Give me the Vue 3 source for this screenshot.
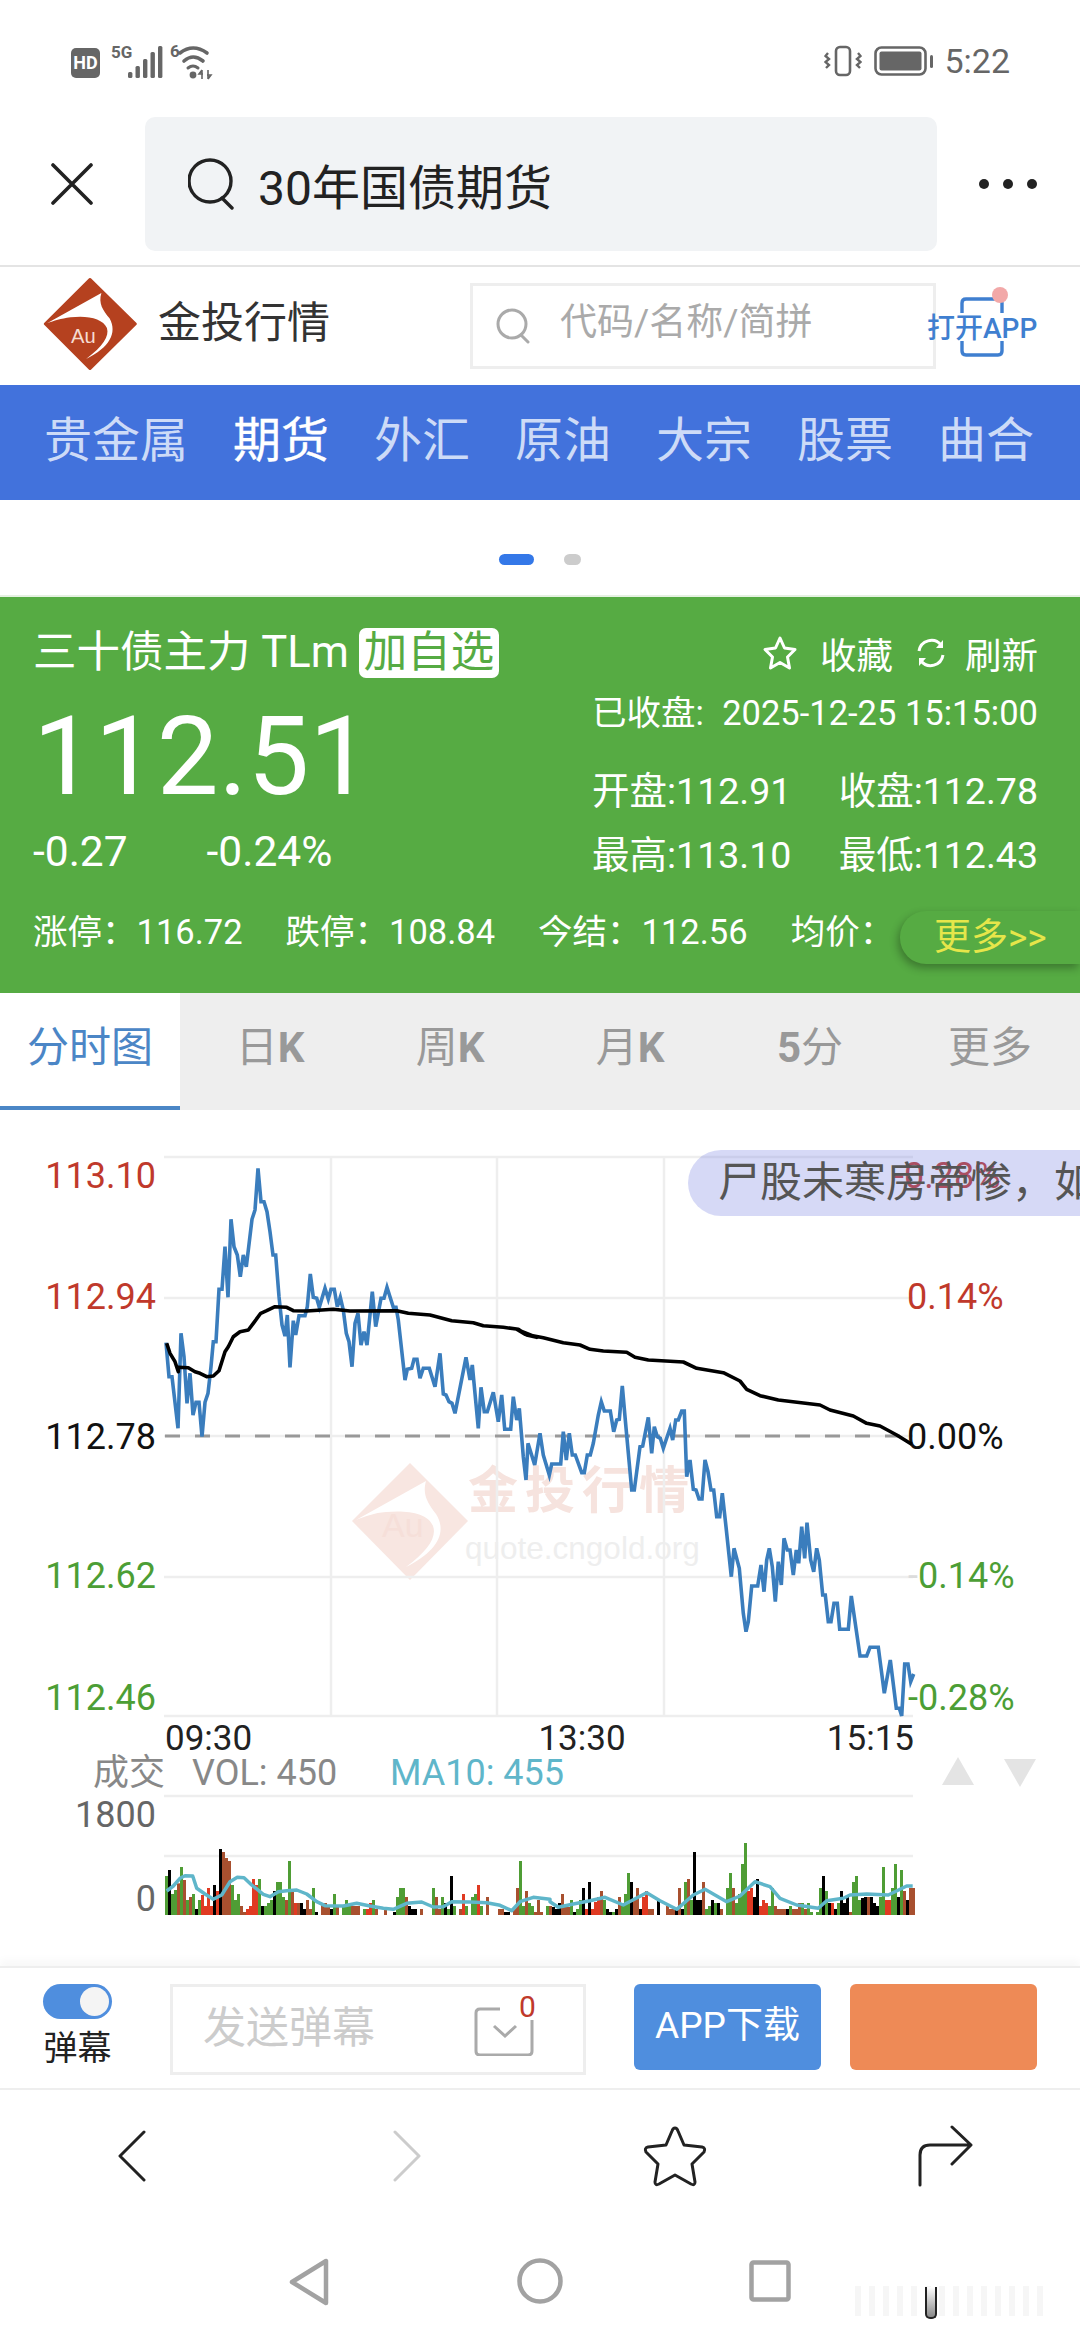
<template>
  <div class="page">
    <!-- status bar -->
    <div class="status-bar">
      <div class="status-left">
        <span class="hd">HD</span>
        <svg class="signal" width="52" height="34" viewBox="0 0 52 34">
          <text x="0" y="13" class="tiny">5G</text>
          <rect v-for="(b, i) in signalBars" :key="i" :x="b.x" :y="b.y" width="4.4" :height="33 - b.y" rx="1.5" fill="#666" />
        </svg>
        <svg class="wifi" width="46" height="36" viewBox="0 0 46 36">
          <text x="0" y="13" class="tiny">6</text>
          <path d="M10 9 Q23 -1 37 9" fill="none" stroke="#666" stroke-width="3.6" stroke-linecap="round" />
          <path d="M14 17 Q23 9 33 17" fill="none" stroke="#666" stroke-width="3.6" stroke-linecap="round" />
          <path d="M18 24 Q23 20 28 24" fill="none" stroke="#666" stroke-width="3" stroke-linecap="round" />
          <circle cx="23" cy="31" r="3.4" fill="#666" />
          <path d="M32 26 V35 M38 26 V35 M32 26 L29 30 H33 M38 35 L41 31 H37" stroke="#666" stroke-width="1.6" fill="none" />
        </svg>
      </div>
      <div class="status-right">
        <svg width="38" height="32" viewBox="0 0 38 32">
          <rect x="12" y="2" width="14" height="28" rx="4" fill="none" stroke="#666" stroke-width="2.6" />
          <path d="M4 8 L1.5 11 L5 14 L1.5 17 L5 20 L2 23" fill="none" stroke="#666" stroke-width="2.4" />
          <path d="M34 8 L36.5 11 L33 14 L36.5 17 L33 20 L36 23" fill="none" stroke="#666" stroke-width="2.4" />
        </svg>
        <svg class="battery" width="60" height="30" viewBox="0 0 60 30">
          <rect x="1.5" y="1.5" width="50" height="27" rx="6" fill="none" stroke="#666" stroke-width="2.6" />
          <rect x="5.5" y="5.5" width="42" height="19" rx="2" fill="#666" />
          <rect x="56" y="9" width="3" height="13" rx="1.5" fill="#666" />
        </svg>
        <span class="clock">5:22</span>
      </div>
    </div>

    <!-- browser bar -->
    <div class="browser-bar">
      <svg class="close-icon" width="42" height="42" viewBox="0 0 42 42">
        <path d="M2 2 L40 40 M40 2 L2 40" stroke="#222" stroke-width="3.6" stroke-linecap="round" />
      </svg>
      <div class="url-box">
        <svg width="48" height="52" viewBox="0 0 48 52">
          <ellipse cx="22" cy="23" rx="21" ry="21" fill="none" stroke="#222" stroke-width="3.4" />
          <path d="M34 40 L44 50" stroke="#222" stroke-width="3.4" stroke-linecap="round" />
        </svg>
        <span class="url-text">30年国债期货</span>
      </div>
      <div class="more-dots"><i></i><i></i><i></i></div>
    </div>

    <!-- site header -->
    <div class="site-header">
      <svg class="logo" width="98" height="96" viewBox="60 45 300 295">
        <path d="M210 55 L350 192 L210 330 L72 192 Z" fill="#b5411f" stroke="#b5411f" stroke-width="8" stroke-linejoin="round" />
        <path d="M78 190 L245 97 C235 130 250 150 270 175 C295 220 270 265 198 300 C250 262 270 230 262 205 C250 175 200 165 150 172 C120 176 100 183 78 190 Z" fill="#fff" />
        <text x="152" y="252" class="logo-au">Au</text>
      </svg>
      <span class="site-name">金投行情</span>
      <div class="site-search">
        <svg width="36" height="36" viewBox="0 0 36 36">
          <circle cx="17" cy="16" r="14" fill="none" stroke="#aaa" stroke-width="3" />
          <path d="M26 27 L33 34" stroke="#aaa" stroke-width="3" stroke-linecap="round" />
        </svg>
        <span class="site-search-text">代码/名称/简拼</span>
      </div>
      <div class="open-app">
        <svg width="44" height="60" viewBox="0 0 44 60">
          <path d="M2 16 V6 Q2 2 6 2 H38 Q42 2 42 6 V16 M2 44 V54 Q2 58 6 58 H38 Q42 58 42 54 V44" fill="none" stroke="#3f7fd0" stroke-width="3.4" />
        </svg>
        <i class="app-dot"></i>
        <span class="app-label">打开APP</span>
      </div>
    </div>

    <!-- channel nav -->
    <div class="channel-nav">
      <span v-for="c in channels" :key="c" :class="{ on: c === '期货' }">{{ c }}</span>
    </div>

    <div class="pager"><i class="cur"></i><i></i></div>

    <!-- quote panel -->
    <div class="quote">
      <div class="quote-head">
        <div class="quote-title">三十债主力 TLm<span class="add-tag">加自选</span></div>
        <div class="quote-actions">
          <svg width="36" height="36" viewBox="0 0 36 36">
            <path d="M18 3 L22.5 13 L33 14.5 L25.5 22 L27.5 33 L18 27.5 L8.5 33 L10.5 22 L3 14.5 L13.5 13 Z" fill="none" stroke="#fff" stroke-width="3" stroke-linejoin="round" />
          </svg>
          <span class="act-text">收藏</span>
          <svg class="refresh" width="32" height="34" viewBox="0 0 32 34">
            <path d="M4 15 A12.5 12.5 0 0 1 26 9 M28 19 A12.5 12.5 0 0 1 6 25" fill="none" stroke="#fff" stroke-width="3" />
            <path d="M28 4 V12 H21 M4 30 V22 H11" fill="#fff" />
          </svg>
          <span class="act-text">刷新</span>
        </div>
      </div>
      <div class="quote-main">
        <div class="quote-left">
          <div class="price">112.51</div>
          <div class="change"><span>-0.27</span><span>-0.24%</span></div>
        </div>
        <div class="quote-right">
          <div class="closed"><span>已收盘:</span><span>2025-12-25 15:15:00</span></div>
          <div class="pair"><span>开盘:112.91</span><span>收盘:112.78</span></div>
          <div class="pair second"><span>最高:113.10</span><span>最低:112.43</span></div>
        </div>
      </div>
      <div class="quote-foot">
        <span>涨停：116.72</span><span>跌停：108.84</span><span>今结：112.56</span><span>均价：</span>
      </div>
      <div class="more-pill">更多<small>&gt;&gt;</small></div>
    </div>

    <!-- period tabs -->
    <div class="tabs">
      <div class="tab active">分时图</div>
      <div class="tab">日<b>K</b></div>
      <div class="tab">周<b>K</b></div>
      <div class="tab">月<b>K</b></div>
      <div class="tab"><b>5</b>分</div>
      <div class="tab">更多</div>
    </div>

    <!-- chart -->
    <div class="chart-wrap">
      <svg class="chart" width="1080" height="856" viewBox="0 1110 1080 856">
        <!-- watermark -->
        <g>
          <path d="M410 1463 L468 1521 L410 1580 L352 1521 Z" fill="#f8e6e1" />
          <path d="M356 1520 L426 1481 C422 1495 428 1503 436 1514 C448 1533 436 1552 406 1567 C428 1551 437 1537 433 1526 C428 1513 407 1510 386 1512 C374 1513 366 1516 356 1520 Z" fill="#fff" />
          <text x="382" y="1537" class="wm-au">Au</text>
          <text x="468" y="1508" class="wm-name">金投行情</text>
          <text x="465" y="1559" class="wm-url">quote.cngold.org</text>
        </g>

        <line v-for="x in [331, 497, 664]" :key="x" :x1="x" :x2="x" y1="1157" y2="1716" class="grid" />
        <line v-for="y in [1157, 1298, 1577, 1716, 1796, 1856]" :key="y" x1="164" x2="913" :y1="y" :y2="y" class="grid" />
        <line x1="164" x2="913" y1="1436" y2="1436" class="grid" />
        <line x1="165" x2="913" y1="1436" y2="1436" class="zero" />

        <text v-for="l in leftLabels" :key="l.y" x="156" :y="l.y" :fill="l.c" class="axis end">{{ l.t }}</text>
        <text v-for="l in rightLabels" :key="l.y" :x="l.x" :y="l.y" :fill="l.c" class="axis">{{ l.t }}</text>
        <text x="908" y="1588" fill="#4c9e35" class="axis"><tspan fill="#dcdcdc">-</tspan>0.14%</text>

        <polyline :points="pricePts" class="price-line" />
        <polyline :points="avgPts" class="avg-line" />

        <text x="165" y="1750" class="time">09:30</text>
        <text x="582" y="1750" class="time mid">13:30</text>
        <text x="914" y="1750" class="time end">15:15</text>

        <text x="93" y="1785" class="vol-text" fill="#888">成交</text>
        <text x="192" y="1785" class="vol-text" fill="#888">VOL: 450</text>
        <text x="390" y="1785" class="vol-text" fill="#5fb6ca">MA10: 455</text>
        <path d="M958 1757 L974 1785 H942 Z" fill="#e4e4e4" />
        <path d="M1004 1759 H1036 L1020 1787 Z" fill="#e4e4e4" />

        <text x="156" y="1827" class="axis end" fill="#666">1800</text>
        <text x="156" y="1911" class="axis end" fill="#666">0</text>

        <rect v-for="b in volBars" :key="b.x" :x="b.x" :y="1915 - b.h" width="3" :height="b.h" :fill="b.c" />
        <polyline :points="maPts" class="ma-line" />
      </svg>
      <div class="danmu">尸股未寒房帝惨，如</div>
    </div>

    <!-- danmu toolbar -->
    <div class="toolbar">
      <div class="switch-col">
        <div class="switch"><i></i></div>
        <span>弹幕</span>
      </div>
      <div class="danmu-input">
        <span>发送弹幕</span>
        <svg width="62" height="64" viewBox="0 0 62 64">
          <path d="M26 17 H6 Q2 17 2 21 V59 Q2 63 6 63 H54 Q58 63 58 59 V28" fill="none" stroke="#aaa" stroke-width="3" />
          <path d="M20 34 L31 44 L42 34" fill="none" stroke="#aaa" stroke-width="3" />
        </svg>
        <em>0</em>
      </div>
      <div class="btn-app">APP下载</div>
      <div class="btn-orange"></div>
    </div>

    <!-- browser toolbar -->
    <div class="browser-nav">
      <svg width="28" height="52" viewBox="0 0 28 52">
        <path d="M26 2 L2 26 L26 50" fill="none" stroke="#222" stroke-width="3" stroke-linecap="round" stroke-linejoin="round" />
      </svg>
      <svg width="28" height="52" viewBox="0 0 28 52">
        <path d="M2 2 L26 26 L2 50" fill="none" stroke="#ccc" stroke-width="3" stroke-linecap="round" stroke-linejoin="round" />
      </svg>
      <svg width="66" height="62" viewBox="0 0 66 62">
        <path d="M33 3 Q35 3 36 6 L42 20 L60 22 Q64 23 62 27 L50 39 L53 57 Q53 61 49 59 L33 50 L17 59 Q13 61 13 57 L16 39 L4 27 Q2 23 6 22 L24 20 L30 6 Q31 3 33 3 Z" fill="none" stroke="#222" stroke-width="3" stroke-linejoin="round" />
      </svg>
      <svg width="56" height="62" viewBox="0 0 56 62">
        <path d="M2 60 V30 Q2 20 12 20 H52 M34 2 L53 20 L34 39" fill="none" stroke="#222" stroke-width="3" stroke-linecap="round" stroke-linejoin="round" />
      </svg>
    </div>

    <!-- system nav -->
    <div class="system-nav">
      <svg width="40" height="48" viewBox="0 0 40 48">
        <path d="M37 3 V45 L3 24 Z" fill="none" stroke="#a2a2a2" stroke-width="4.5" stroke-linejoin="round" />
      </svg>
      <svg width="46" height="46" viewBox="0 0 46 46">
        <circle cx="23" cy="23" r="20.5" fill="none" stroke="#a2a2a2" stroke-width="4.5" />
      </svg>
      <svg width="42" height="42" viewBox="0 0 42 42">
        <rect x="2.5" y="2.5" width="37" height="37" rx="2" fill="none" stroke="#a2a2a2" stroke-width="4.5" />
      </svg>
      <i class="stripes"></i>
      <i class="mark"></i>
    </div>
  </div>
</template>

<script setup>
const channels = ['贵金属', '期货', '外汇', '原油', '大宗', '股票', '曲合']

const signalBars = [
  { x: 17, y: 27 },
  { x: 24.5, y: 21 },
  { x: 32, y: 14 },
  { x: 39.5, y: 7 },
  { x: 47, y: 1 }
]

const leftLabels = [
  { t: '113.10', y: 1188, c: '#c0392b' },
  { t: '112.94', y: 1309, c: '#c0392b' },
  { t: '112.78', y: 1449, c: '#111' },
  { t: '112.62', y: 1588, c: '#4c9e35' },
  { t: '112.46', y: 1710, c: '#4c9e35' }
]

const rightLabels = [
  { t: '-0.28%', x: 894, y: 1188, c: '#c0392b' },
  { t: '0.14%', x: 907, y: 1309, c: '#c0392b' },
  { t: '0.00%', x: 907, y: 1449, c: '#111' },
  { t: '-0.28%', x: 908, y: 1710, c: '#4c9e35' }
]

// zoomed-in readings of the curves, left part then right part
const priceA = '48,578 57,680 66,680 84,835 93,550 102,620 111,760 120,670 129,795 138,757 147,757 156,860 165,757 174,730 183,650 190,575 198,575 207,418 216,418 225,290 234,442 243,208 252,290 262,315 271,380 280,315 289,350 306,208 315,180 324,55 333,155 342,155 351,185 360,245 369,315 377,315 387,440 396,525 405,558 412,495 420,652 430,512 437,555 447,497 465,497 472,470 481,372 490,442 500,445 508,472 525,415 535,447 543,418 553,418 562,470 571,442 580,480 589,550 597,575 606,650 615,520 624,490 633,585 642,545 651,585 667,425 677,530 693,445 702,445 711,412 730,472 738,472 745,510 765,690 772,658 785,655 792,628 801,628 810,685 820,655 838,655 855,710 870,610 880,732 888,735 897,755 906,760 915,790 948,622 960,690 967,645 985,835 993,712 1003,785 1012,785 1030,727 1045,815'
const priceB = '5,285 14,388 32,388 40,290 50,360 58,325 70,470 78,540 84,430 104,495 120,400 130,465 148,525 155,492 182,492 190,395 199,480 208,400 217,465 226,465 245,518 253,518 262,465 271,465 280,430 295,345 304,305 313,333 331,333 341,395 350,360 358,358 367,258 376,360 395,570 403,570 420,440 428,438 445,352 455,460 463,380 472,410 481,415 490,445 510,385 518,420 527,360 535,360 545,333 553,333 560,530 570,480 580,568 588,570 597,597 606,597 615,480 624,515 633,570 641,570 650,650 659,650 667,580 678,680 694,830 702,745 718,805 730,940 738,995 745,965 755,858 773,858 783,795 792,875 800,780 808,745 817,800 826,905 835,785 844,855 852,715 862,750 870,750 880,825 889,750 896,790 905,680 914,775 921,668 932,780 941,815 950,745 958,780 968,885 976,885 985,965 993,965 1002,910 1012,910 1019,988 1045,988 1054,888 1080,1068 1100,1068 1110,1042 1135,1042 1153,1180 1171,1080 1189,1225 1198,1225 1205,1248 1214,1092 1224,1092 1232,1145 1241,1122'
const avgA = '50,580 60,610 75,635 85,665 85,652 115,653 135,665 150,670 170,680 190,678 207,662 225,605 235,590 250,560 270,545 295,540 310,520 332,490 350,482 375,470 410,472 430,482 470,483 550,478 600,483 740,482 775,490 840,495 905,512 970,518 1000,527 1060,532 1105,538 1130,555 1160,562'
const avgB = '50,88 75,103 130,113 190,128 240,135 270,148 310,153 380,157 405,172 445,180 550,186 590,205 670,218 720,243 740,268 780,287 835,300 960,315 990,330 1060,348 1100,370 1140,378 1190,405 1235,433'

const toScreen = (raw, ox, oy) =>
  raw.split(' ').map((p) => {
    const [x, y] = p.split(',').map(Number)
    return `${(ox + x / 3).toFixed(1)},${(oy + y / 3).toFixed(1)}`
  })

const pricePts = [...toScreen(priceA, 150, 1150), ...toScreen(priceB, 500, 1300)].join(' ')
const avgPts = [...toScreen(avgA, 150, 1150), ...toScreen(avgB, 500, 1300)].join(' ')

// colour letter + top of the bar in the 3x crop, baseline sits at 405
const volRaw = 'g288 k270 g342 g330 b310 g261 b300 g360 b351 g342 k387 g360 r345 r378 r324 r378 k315 r333 k207 b216 b234 b243 g315 g360 g342 b378 b396 r387 r378 r297 r315 g297 k378 g378 g369 g360 k333 g306 g306 g351 b360 g243 b333 r369 b369 k369 k387 b360 b387 g324 k396 - b369 b369 b378 k387 g342 b378 - g378 g360 g378 b378 b378 b378 - g387 r387 r369 g360 b387 - - b387 - - k396 g351 g324 g324 b351 k378 k387 k387 - b387 - - - g324 b351 b387 g351 k369 g387 k288 g378 - b387 r342 g378 - g351 g342 r315 g378 - b351 - - - b387 b387 k396 k396 - b387 b324 g243 g378 b333 g369 g378 b396 b360 b396 - g378 b378 k381 k387 k369 b342 b378 b381 g360 k396 g387 g360 k324 r387 k306 r387 r366 r351 b333 g360 k387 k396 g396 k387 b351 g369 g342 g279 k306 b360 b324 k387 r351 r333 b387 b387 - k360 - - b378 b387 b387 k390 b324 k387 g306 b297 g360 k216 k360 k360 b306 g387 g378 k360 g369 k369 b387 - g324 g279 b324 g369 g342 g252 g189 r333 r324 k351 k297 r378 r360 r369 g378 g324 b378 b387 b387 b387 k387 g378 b387 b387 b369 g369 b387 g369 g396 - g396 g324 k288 g333 k369 r369 k387 g369 k333 k369 k351 b396 g306 g288 g360 k354 k351 b351 k351 k369 k378 g351 g261 r360 r360 g324 g252 k351 g270 b333 k360 b324 b324'
const volColors = { g: '#4f9d35', k: '#000', r: '#e03a22', b: '#a8502f' }

const volBars = volRaw.split(' ').flatMap((t, i) => {
  if (t === '-') return []
  return [{ x: 165 + i * 3, h: (405 - Number(t.slice(1))) / 3, c: volColors[t[0]] }]
})

const maRaw = '50,333 70,318 90,295 105,287 128,288 140,325 165,342 190,358 215,345 240,305 262,292 282,293 305,315 340,343 360,350 385,335 410,332 440,330 470,342 500,365 525,377 580,378 620,370 660,378 700,385 730,388 770,370 815,366 850,381 880,380 905,365 960,366 1010,368 1050,376 1085,392 1110,365 1150,352 1200,358'
const maRaw2 = '0,356 40,352 60,365 85,382 130,372 180,362 225,352 280,375 350,338 390,362 440,388 490,345 525,328 590,365 630,348 675,305 720,320 750,355 800,375 865,385 890,362 940,355 960,345 1010,342 1075,345 1130,318 1148,318'
const maPts = [
  ...toScreen(maRaw, 150, 1780),
  ...toScreen(maRaw2, 530, 1780).slice(2)
].join(' ')
</script>

<style scoped>
.page {
  width: 1080px;
  height: 2340px;
  overflow: hidden;
  background: #fff;
  font-family: Roboto, "Noto Sans CJK SC", sans-serif;
  color: #222;
}

/* status bar */
.status-bar {
  height: 110px;
  padding: 44px 70px 0 71px;
  box-sizing: border-box;
  display: flex;
  justify-content: space-between;
  align-items: flex-start;
}

.status-left,
.status-right {
  display: flex;
  align-items: center;
}

.hd {
  width: 29px;
  height: 30px;
  margin-top: 2px;
  border-radius: 5px;
  background: #666;
  color: #fff;
  font-size: 18px;
  font-weight: 700;
  line-height: 30px;
  text-align: center;
}

.signal {
  margin-left: 11px;
  overflow: visible;
}

.wifi {
  margin-left: 7px;
  overflow: visible;
}

.tiny {
  font: 700 17px "Roboto", sans-serif;
  fill: #666;
}

.battery {
  margin-left: 12px;
}

.clock {
  margin-left: 10px;
  font-size: 34px;
  line-height: 34px;
  color: #666;
}

/* browser bar */
.browser-bar {
  height: 157px;
  box-sizing: border-box;
  border-bottom: 2px solid #e4e4e4;
  padding: 7px 0 14px 51px;
  display: flex;
  align-items: stretch;
}

.close-icon {
  align-self: center;
}

.url-box {
  flex: none;
  width: 792px;
  margin-left: 52px;
  background: #f1f3f5;
  border-radius: 10px;
  display: flex;
  align-items: center;
  padding-left: 43px;
  box-sizing: border-box;
}

.url-text {
  margin-left: 22px;
  font-size: 48px;
  color: #222;
}

.more-dots {
  margin-left: 42px;
  display: flex;
  gap: 14px;
  align-items: center;
}

.more-dots i {
  width: 10px;
  height: 10px;
  border-radius: 50%;
  background: #222;
}

/* site header */
.site-header {
  height: 118px;
  display: flex;
  align-items: center;
  padding-left: 41px;
  box-sizing: border-box;
}

.logo {
  margin-bottom: 4px;
}

.logo-au {
  font: 62px "Liberation Sans", sans-serif;
  fill: #f6dcd2;
}

.site-name {
  margin-left: 19px;
  width: 172px;
  font-size: 43px;
  color: #333;
  margin-bottom: 14px;
}

.site-search {
  margin-left: 140px;
  width: 466px;
  height: 86px;
  box-sizing: border-box;
  border: 3px solid #eee;
  display: flex;
  align-items: center;
  padding-left: 22px;
  gap: 29px;
  font-size: 37px;
  color: #aaa;
}

.site-search-text {
  margin-bottom: 14px;
}

.open-app {
  position: relative;
  width: 110px;
  height: 86px;
  margin-left: -9px;
  display: flex;
  justify-content: center;
  align-items: center;
}

.open-app svg {
  margin-top: 2px;
}

.app-dot {
  position: absolute;
  top: 4px;
  right: 29px;
  width: 16px;
  height: 16px;
  border-radius: 50%;
  background: #f2a8a8;
}

.app-label {
  position: absolute;
  left: 0;
  right: -4px;
  top: 26px;
  font-size: 28px;
  font-weight: 500;
  line-height: 40px;
  color: #3f7fd0;
  white-space: nowrap;
}

/* channel nav */
.channel-nav {
  height: 115px;
  background: #4272dc;
  display: flex;
  gap: 45px;
  padding-left: 44px;
  box-sizing: border-box;
  font-size: 48px;
  line-height: 112px;
  color: #cddbf7;
  white-space: nowrap;
}

.channel-nav .on {
  color: #fff;
  -webkit-text-stroke: 0.3px #fff;
}

.pager {
  height: 95px;
  display: flex;
  justify-content: center;
  align-items: center;
  gap: 30px;
  padding-top: 24px;
  box-sizing: border-box;
}

.pager i {
  width: 17px;
  height: 11px;
  border-radius: 6px;
  background: #ccc;
}

.pager .cur {
  width: 35px;
  background: #3478e8;
}

/* quote panel */
.quote {
  position: relative;
  height: 398px;
  box-sizing: border-box;
  border-top: 2px solid #e5f1e2;
  background: #56ab43;
  padding: 31px 42px 0 33px;
  color: #fff;
}

.quote-head {
  display: flex;
  justify-content: space-between;
  align-items: center;
  height: 50px;
}

.quote-title {
  font-size: 43.5px;
  line-height: 50px;
  white-space: nowrap;
}

.add-tag {
  margin-left: 10px;
  padding: 0 5px;
  background: #fff;
  border-radius: 7px;
  color: #56ab43;
  display: inline-block;
}

.quote-actions {
  display: flex;
  align-items: center;
}

.act-text {
  margin-left: 22px;
  font-size: 36.5px;
}

.refresh {
  margin-left: 22px;
}

.act-text:last-child {
  margin-left: 18px;
}

.quote-main {
  display: flex;
  justify-content: space-between;
}

.price {
  margin-top: 29px;
  font-size: 110px;
  line-height: 100px;
  white-space: nowrap;
}

.change {
  margin-top: 22px;
  display: flex;
  gap: 79px;
  font-size: 42.5px;
  line-height: 46px;
}

.quote-right {
  width: 446px;
  font-size: 37.5px;
  line-height: 40px;
  white-space: nowrap;
}

.closed {
  margin-top: 15px;
  display: flex;
  justify-content: space-between;
  font-size: 34.5px;
}

.pair {
  margin-top: 38px;
  display: flex;
  justify-content: space-between;
}

.pair.second {
  margin-top: 24px;
}

.quote-foot {
  margin-top: 37px;
  display: flex;
  gap: 43px;
  font-size: 34.5px;
  line-height: 40px;
  white-space: nowrap;
}

.more-pill {
  position: absolute;
  right: 0;
  top: 314px;
  width: 180px;
  height: 53px;
  box-sizing: border-box;
  padding-left: 34px;
  background: #56ab43;
  border-radius: 26px 0 0 26px;
  box-shadow: -2px 4px 8px rgba(0, 0, 0, 0.3);
  color: #e6e64a;
  font-size: 37px;
  line-height: 53px;
}

.more-pill small {
  font-size: 37px;
}

/* period tabs */
.tabs {
  height: 117px;
  display: flex;
  background: #eee;
}

.tab {
  flex: 1;
  text-align: center;
  font-size: 42px;
  line-height: 110px;
  color: #999;
}

.tab.active {
  flex: none;
  width: 180px;
  background: #fff;
  color: #4b86c6;
  box-sizing: border-box;
  border-bottom: 4px solid #4b86c6;
}

/* chart */
.chart-wrap {
  position: relative;
  height: 856px;
  overflow: hidden;
}

.chart {
  display: block;
}

.grid {
  stroke: #eee;
  stroke-width: 2.5;
}

.zero {
  stroke: #999;
  stroke-width: 3;
  stroke-dasharray: 15 15;
}

.axis {
  font-size: 36px;
}

.end {
  text-anchor: end;
}

.mid {
  text-anchor: middle;
}

.time {
  font-size: 35px;
  fill: #222;
}

.vol-text {
  font-size: 36px;
}

.price-line {
  fill: none;
  stroke: #3a7dbd;
  stroke-width: 3.6;
  stroke-linejoin: miter;
}

.avg-line {
  fill: none;
  stroke: #000;
  stroke-width: 3.6;
  stroke-linejoin: round;
}

.ma-line {
  fill: none;
  stroke: #5fb6ca;
  stroke-width: 3.5;
  stroke-linejoin: round;
}

.wm-au {
  font: 34px "Liberation Sans", sans-serif;
  fill: #f6dfd9;
}

.wm-name {
  font-size: 50px;
  font-weight: 700;
  letter-spacing: 7px;
  fill: #f6e3de;
}

.wm-url {
  font: 31.5px "Liberation Sans", sans-serif;
  fill: #eeeeee;
}

.danmu {
  position: absolute;
  left: 688px;
  top: 40px;
  width: 392px;
  height: 66px;
  box-sizing: border-box;
  padding-left: 30px;
  overflow: hidden;
  border-radius: 33px 0 0 33px;
  background: rgba(120, 128, 225, 0.3);
  color: #555;
  font-size: 42px;
  line-height: 66px;
  white-space: nowrap;
}

/* danmu toolbar */
.toolbar {
  height: 124px;
  box-sizing: border-box;
  border-top: 2px solid #eee;
  border-bottom: 2px solid #eee;
  box-shadow: 0 -6px 8px rgba(0, 0, 0, 0.03);
  position: relative;
  padding: 16px 43px 0;
  display: flex;
  align-items: flex-start;
}

.switch-col {
  width: 69px;
  text-align: center;
  font-size: 34px;
  line-height: 46px;
  color: #222;
}

.switch {
  width: 69px;
  height: 35px;
  margin-bottom: 6px;
  border-radius: 18px;
  background: #4f8ede;
  position: relative;
}

.switch i {
  position: absolute;
  right: 3px;
  top: 3px;
  width: 29px;
  height: 29px;
  border-radius: 50%;
  background: #f4f4f4;
}

.danmu-input {
  position: relative;
  margin-left: 58px;
  width: 416px;
  height: 91px;
  box-sizing: border-box;
  border: 3px solid #eee;
  padding-left: 30px;
  font-size: 43px;
  line-height: 82px;
  color: #ccc;
}

.danmu-input svg {
  position: absolute;
  left: 301px;
  top: 5px;
}

.danmu-input em {
  position: absolute;
  left: 346px;
  top: 4px;
  font-size: 30px;
  font-style: normal;
  line-height: 32px;
  color: #c0392b;
}

.btn-app,
.btn-orange {
  width: 187px;
  height: 86px;
  border-radius: 6px;
}

.btn-app {
  margin-left: 48px;
  background: #4f8ede;
  color: #fff;
  font-size: 37px;
  line-height: 84px;
  text-align: center;
}

.btn-orange {
  margin-left: 29px;
  background: #ee8a56;
}

/* bottom bars */
.browser-nav {
  height: 136px;
  display: grid;
  grid-template-columns: 132px 275px 273px 1fr;
  align-items: center;
  padding: 0 0 4px 118px;
  box-sizing: border-box;
}

.browser-nav svg:nth-child(2) {
  margin-left: 143px;
}

.browser-nav svg:nth-child(3) {
  margin-left: 117px;
}

.browser-nav svg:nth-child(4) {
  margin-left: 120px;
}

.system-nav {
  position: relative;
  height: 114px;
  display: flex;
  align-items: flex-start;
  padding: 32px 0 0 289px;
  box-sizing: border-box;
}

.system-nav svg:nth-child(2) {
  margin-left: 188px;
}

.system-nav svg:nth-child(3) {
  margin-left: 186px;
  margin-top: 2px;
}

.stripes {
  position: absolute;
  left: 855px;
  top: 60px;
  width: 190px;
  height: 30px;
  background: repeating-linear-gradient(90deg, #f6f6f6 0 6px, #fff 6px 14px);
}

.mark {
  position: absolute;
  left: 925px;
  top: 61px;
  width: 8px;
  height: 30px;
  border-radius: 0 0 5px 5px;
  border: 2px solid #222;
  border-top: none;
  background: linear-gradient(#fff, #888);
}
</style>

<style>
html,
body {
  margin: 0;
  background: #fff;
}
</style>
